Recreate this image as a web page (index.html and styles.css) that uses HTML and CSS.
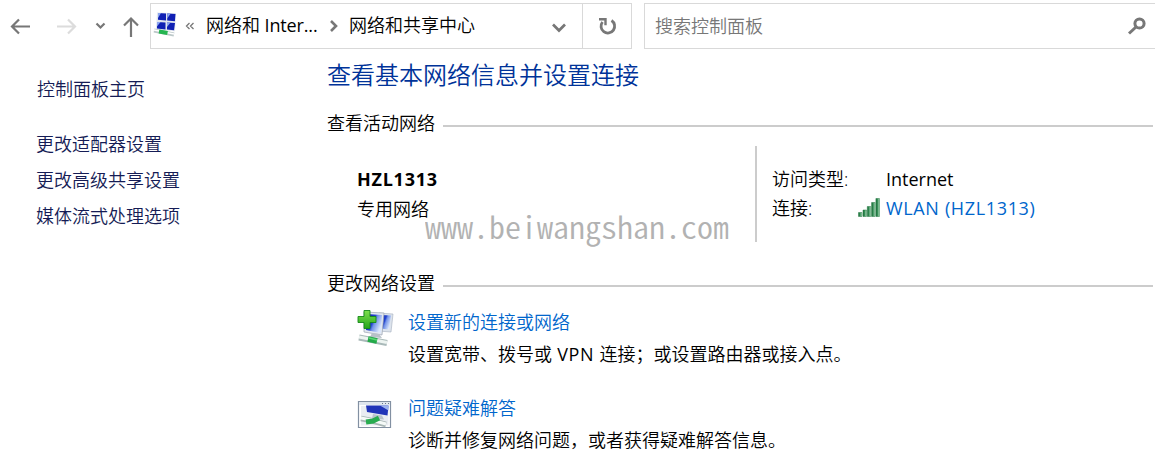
FILE: index.html
```html
<!DOCTYPE html>
<html lang="zh-CN">
<head>
<meta charset="utf-8">
<title>网络和共享中心</title>
<link rel="stylesheet" href="styles.css">
</head>
<body>
<svg class="defs" width="0" height="0" aria-hidden="true">
  <defs>
    <linearGradient id="screen" x1="0" y1="0" x2="1" y2=".5"><stop offset="0" stop-color="#0717a8"/><stop offset=".5" stop-color="#2444cf"/><stop offset=".62" stop-color="#7292e8"/><stop offset="1" stop-color="#dbe7fc"/></linearGradient>
    <linearGradient id="plus" x1="0" y1="0" x2="0" y2="1"><stop offset="0" stop-color="#7ee04c"/><stop offset="1" stop-color="#25a51b"/></linearGradient>
    <linearGradient id="bar" x1="0" y1="0" x2="1" y2="0"><stop offset="0" stop-color="#1c7039"/><stop offset=".4" stop-color="#2e8650"/><stop offset="1" stop-color="#b5e4c0"/></linearGradient>
  </defs>
</svg>
<header class="toolbar">
  <nav class="nav">
    <svg width="150" height="46" viewBox="0 3 150 46" fill="none" stroke="#777" stroke-width="2.200">
      <path d="M30 26.500H12M19 19.500l-7 7 7 7"/>
      <path stroke="#dcdcdc" d="M57 26.500h18M68 19.500l7 7-7 7"/>
      <path d="M96.500 23.500l4 4 4-4"/>
      <path d="M131 37V19M124 25.500l7-7 7 7"/>
    </svg>
  </nav>
  <div class="address">
    <svg class="address-icon" width="24" height="28" viewBox="0 0 24 28">
      <path fill="#e1e6ee" d="M4 2.500l19 .8-1 18-19-2z"/>
      <path fill="#1020b4" d="M5 3l8 .5v7l-8-.8zM14.200 3.500l8.300.5-.6 7.300-7.700-.7zM4 12l8.500.5v7L4 18.500zM14 12.600l8 .5-1 7.200-7-.8z"/>
      <path fill="#8ca5ef" d="M5 3h3l-3 5zM14.200 3.500h3.500l-3.500 5zM4 12h3.500L4 16.500zM14 12.600h3.500L14 17z"/>
      <path stroke="#bcc8c9" stroke-width="4" d="M1 20.500l20 4"/>
      <path stroke="#fff" stroke-width="1.500" d="M1 20l20 4"/>
      <path stroke="#25b550" stroke-width="4" d="M6 21.500l8.500 1.500"/>
    </svg>
    <svg class="overflow" width="10" height="10" viewBox="0 0 10 10" fill="none" stroke="#777" stroke-width="1.300"><path d="M4.500 2l-3 3 3 3M8.500 2l-3 3 3 3"/></svg>
    <span class="crumb crumb-parent">网络和<span class="latin-tight"> Inter...</span></span>
    <svg class="crumb-arrow" width="10" height="14" viewBox="0 0 10 14" fill="none" stroke="#777" stroke-width="2.600"><path d="M2 2l5 5-5 5"/></svg>
    <span class="crumb">网络和共享中心</span>
    <svg class="dropdown" width="14" height="10" viewBox="0 0 14 10" fill="none" stroke="#777" stroke-width="2.700"><path d="M1 1.500l6 6 6-6"/></svg>
    <div class="refresh"><svg width="20" height="20" viewBox="0 0 20 20" fill="none" stroke="#777" stroke-width="2.800"><path d="M14.500 4.500A6.800 6.800 0 1 1 5.500 6"/><path d="M2 3.200h6.500v6" stroke-width="2.400"/></svg></div>
  </div>
  <div class="search">
    <span>搜索控制面板</span>
    <svg width="18" height="18" viewBox="0 0 18 18" fill="none" stroke="#777"><circle cx="11.500" cy="6.500" r="4.600" stroke-width="3"/><path stroke-width="3" d="M8 10l-7 6.500"/></svg>
  </div>
</header>
<div class="page">
  <aside class="sidebar">
    <a class="home">控制面板主页</a>
    <a>更改适配器设置</a>
    <a>更改高级共享设置</a>
    <a>媒体流式处理选项</a>
  </aside>
  <main class="main">
    <h1>查看基本网络信息并设置连接</h1>
    <h2 class="active-heading">查看活动网络</h2>
    <section class="network">
      <div class="identity">
        <strong>HZL1313</strong>
        <span>专用网络</span>
        <div class="watermark">www.beiwangshan.com</div>
      </div>
      <dl class="details">
        <dt>访问类型:</dt><dd>Internet</dd>
        <dt>连接:</dt>
        <dd class="connection">
          <svg class="signal" width="22" height="19" viewBox="0 0 22 19" fill="url(#bar)" stroke="#257943" stroke-width=".5"><path d="M.5 14.500H4V18.500H.5z"/><path d="M5 12H8.500V18.500H5z"/><path d="M9.300 8.500H12.800V18.500H9.300z"/><path d="M13.600 4.500H17.100V18.500H13.600z"/><path d="M17.900.5H21.500V18.500H17.900z"/></svg>
          <a>WLAN (HZL1313)</a>
        </dd>
      </dl>
    </section>
    <h2 class="settings-heading">更改网络设置</h2>
    <section class="task first">
      <svg width="38" height="38" viewBox="0 0 38 38">
        <path fill="#dce3ec" stroke="#a5afbd" stroke-width=".6" d="M22 4l14 1-2 18-13-1z"/>
        <path fill="url(#screen)" d="M24 6l10 .5-2 14-9-1z"/>
        <path fill="#e3e8f0" stroke="#99a3b2" stroke-width=".7" d="M7 3l20 1-2 22-18-3z"/>
        <path fill="url(#screen)" d="M9 5l16 1-1 18-15-3z"/>
        <path fill="#b8c1c8" d="M15 24l7 1 3 4-12-1z"/>
        <path stroke="#a9b9b9" stroke-width="6" d="M2 28.500l28 5.500"/>
        <path stroke="#edf4f1" stroke-width="3" d="M2 28l28 5.500"/>
        <path stroke="#23aa49" stroke-width="5.500" d="M11 30l9 2"/>
        <path stroke="#5bd775" stroke-width="1.500" d="M12 29l8 2"/>
        <path fill="url(#plus)" stroke="#148919" stroke-width=".9" d="M7 1.500h6v6h6v6h-6v6H7v-6H1v-6h6z"/>
      </svg>
      <div><a>设置新的连接或网络</a><p>设置宽带、拨号或<span class="latin"> VPN </span>连接；或设置路由器或接入点。</p></div>
    </section>
    <section class="task">
      <svg width="38" height="38" viewBox="0 0 38 38">
        <path fill="#fff" stroke="#8290a2" stroke-width="1.200" d="M1.500 6.500h32v26h-32z"/>
        <path fill="#dfe6ee" d="M2 7h31v3H2z"/>
        <path fill="#e9edf2" d="M4 11h27.500v19.500H4z"/>
        <path fill="#2034b8" d="M9 10.500h22.500l-1 10L10 17z"/>
        <path fill="#9ab1ed" d="M23 10.500h8.500v5z"/>
        <path fill="#b9c3cb" d="M16 19l9 1.500 2 4-12-1z"/>
        <path fill="none" stroke="#a7b5b4" stroke-width="5.500" d="M4 23.500l10 2 15 4"/>
        <path fill="none" stroke="#f5faf8" stroke-width="3" d="M4 23l10 2 15 4"/>
        <path fill="none" stroke="#29ac50" stroke-width="5" d="M9 27l7-1 6-3"/>
        <path stroke="#68768a" d="M25 8.500h1m2 0h1m2 0h1"/>
      </svg>
      <div><a>问题疑难解答</a><p>诊断并修复网络问题，或者获得疑难解答信息。</p></div>
    </section>
  </main>
</div>
</body>
</html>
```
FILE: styles.css
```css
* { box-sizing: border-box; }
body { margin: 0; width: 1155px; height: 457px; overflow: hidden; background: #fff; color: #000; font: 350 18px/30px "Open Sans", "Noto Sans CJK SC", sans-serif; }
.defs { position: absolute; }
svg { flex: none; display: block; }
.toolbar { display: flex; height: 49px; padding-top: 3px; }
.nav { width: 150px; }
.address, .search { height: 46px; border: 1px solid #d9d9d9; display: flex; align-items: center; }
.address { width: 482px; }
.address-icon { margin-left: 2px; margin-top: -4px; }
.overflow { margin-left: 8px; }
.crumb { white-space: nowrap; line-height: 42px; margin-top: -2px; }
.crumb-parent { width: 112px; margin-left: 11px; }
.crumb-arrow { margin: 0 10px 0 11px; }
.dropdown { margin-left: auto; margin-right: 16px; margin-top: 4px; }
.refresh { width: 49px; height: 44px; border-left: 1px solid #d9d9d9; display: flex; align-items: center; justify-content: center; }
.search { width: 511px; margin-left: 12px; padding: 0 9px 0 10px; border-right: 0; justify-content: space-between; color: #777; }
.page { display: flex; }
.sidebar { width: 327px; padding: 22px 0 0 36px; display: flex; flex-direction: column; line-height: 36px; }
.home { margin-bottom: 19px; padding-left: 1px; }
.main { width: 828px; padding-top: 10px; }
h1, h2, p, dl, dd { margin: 0; font-weight: inherit; }
h1 { color: #003399; font-size: 24px; line-height: 32px; }
h2 { display: flex; align-items: center; font-size: 18px; line-height: 24px; margin-top: 20px; }
h2::after { content: ""; height: 2px; flex: 1; margin: 6px 2px 0 8px; background: #ccc; }
.network { margin-top: 11px; height: 96px; display: flex; }
.identity { position: relative; width: 430px; padding: 18px 0 0 30px; border-right: 2px solid #ccc; display: flex; flex-direction: column; }
.identity strong { font-weight: 700; letter-spacing: .75px; }
.watermark { position: absolute; left: 98px; top: 60px; color: #b2b2b2; font: 350 32px/40px "Noto Sans CJK SC", sans-serif; font-feature-settings: "hwid"; transform: scaleY(.96); }
.details { display: grid; grid-template-columns: 114px 170px; grid-auto-rows: 29px; align-content: start; padding: 18px 0 0 15px; }
.details dd { font-weight: 400; }
.connection { display: flex; margin-left: -28px; }
.connection a { letter-spacing: .65px; }
.signal { margin: 5px 6px 0 0; }
a { color: #0066cc; white-space: nowrap; }
.sidebar a { color: #151c55; }
.settings-heading { margin-top: 29px; }
.task { display: flex; height: 62px; padding-left: 30px; margin-top: 24px; }
.task.first { margin-top: 13px; }
.task > svg { margin-top: 1px; }
.task > div { margin-left: 13px; }
.task a { display: block; height: 31px; margin-top: -1px; margin-bottom: 1px; }
.task p { white-space: nowrap; }
.latin { font-weight: 400; letter-spacing: .6px; }
.latin-tight { font-weight: 400; letter-spacing: -.15px; }
```
